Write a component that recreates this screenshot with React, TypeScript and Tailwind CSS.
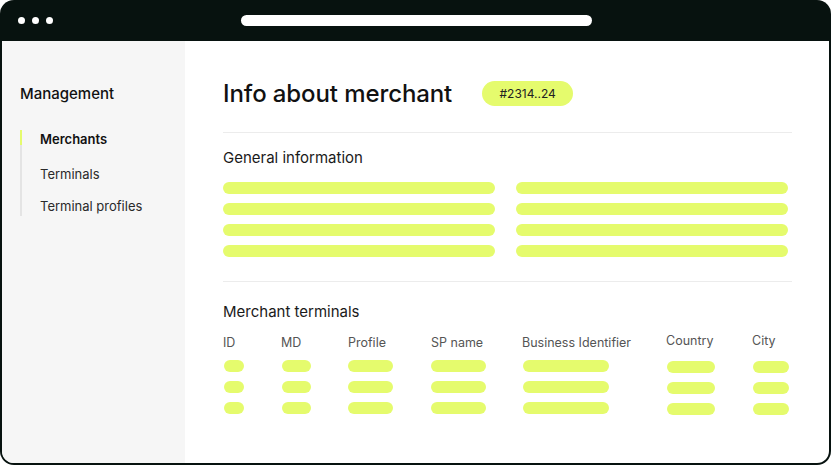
import React from "react";

const LIME = "bg-[#e5fb6d]";

const COLUMNS = [
  { label: "ID", pill: "w-[20px] ml-[1px]" },
  { label: "MD", pill: "w-[29px] ml-[1px]" },
  { label: "Profile", pill: "w-[45px]" },
  { label: "SP name", pill: "w-[55px]" },
  { label: "Business Identifier", pill: "w-[86px] ml-[1px]" },
  { label: "Country", pill: "w-[48px] ml-[1px]", raised: true },
  { label: "City", pill: "w-[36px] ml-[1px]", raised: true },
];

const App: React.FC = () => {
  return (
    <div className="w-[832px] h-[466px] bg-white font-['Inter','Liberation_Sans',sans-serif]">
      <div className="w-[831px] h-[465px] rounded-[14px] bg-[#07120f] px-[2px] pb-[2px] flex flex-col">
        {/* Browser bar */}
        <div className="h-[41px] flex items-center pl-[16px] shrink-0">
          <div className="flex gap-[7px]">
            <span className="w-[7px] h-[7px] rounded-full bg-white" />
            <span className="w-[7px] h-[7px] rounded-full bg-white" />
            <span className="w-[7px] h-[7px] rounded-full bg-white" />
          </div>
          <div className="ml-[188px] w-[351px] h-[11px] rounded-full bg-white" />
        </div>

        <div className="flex-1 flex bg-white rounded-b-[12px] overflow-hidden">
          {/* Sidebar */}
          <aside className="w-[183px] bg-[#f6f6f6] pl-[18px] pt-[43px] shrink-0">
            <h3 className="text-[15px] leading-[20px] font-medium text-[#111]">Management</h3>
            <nav className="relative mt-[26px] border-l-2 border-[#e4e4e4] pl-[18px] pb-[1px] text-[13px] leading-[18px] text-[#2a2a2a]">
              <span className={`absolute -left-[2px] top-0 w-[2px] h-[15px] ${LIME}`} />
              <div className="font-semibold text-[#111]">Merchants</div>
              <div className="mt-[17px]">Terminals</div>
              <div className="mt-[14px]">Terminal profiles</div>
            </nav>
          </aside>

          {/* Main */}
          <main className="flex-1 pl-[38px] pr-[37px] pt-[40px]">
            <div className="flex items-center">
              <h1 className="text-[24px] leading-[25px] font-medium text-[#111] tracking-[-0.1px]">
                Info about merchant
              </h1>
              <span className={`ml-[30px] h-[25px] w-[91px] rounded-full ${LIME} flex items-center justify-center text-[12px] text-[#222]`}>
                #2314..24
              </span>
            </div>

            <div className="mt-[26px] h-px bg-[#ececec]" />

            <h2 className="mt-[15px] text-[15px] leading-[20px] text-[#1a1a1a]">General information</h2>
            <div className="mt-[14px] w-[565px] grid grid-cols-2 gap-x-[21px] gap-y-[9px]">
              {Array.from({ length: 8 }).map((_, i) => (
                <div key={i} className={`h-[12px] rounded-full ${LIME}`} />
              ))}
            </div>

            <div className="mt-[24px] h-px bg-[#ececec]" />

            <h2 className="mt-[20px] text-[15px] leading-[20px] text-[#1a1a1a]">Merchant terminals</h2>
            <div className="mt-[12px] grid grid-cols-[58px_67px_83px_91px_144px_86px_1fr]">
              {COLUMNS.map((col) => (
                <div key={col.label} className="flex flex-col">
                  <div
                    className={`text-[12.5px] leading-[18px] text-[#555] whitespace-nowrap ${
                      col.raised ? "-mt-[2px] mb-[2px]" : ""
                    }`}
                  >
                    {col.label}
                  </div>
                  <div className={`mt-[8px] flex flex-col gap-[9px] ${col.raised ? "pt-[1px]" : ""}`}>
                    {[0, 1, 2].map((r) => (
                      <div key={r} className={`h-[12px] rounded-full ${LIME} ${col.pill}`} />
                    ))}
                  </div>
                </div>
              ))}
            </div>
          </main>
        </div>
      </div>
    </div>
  );
};

export default App;
